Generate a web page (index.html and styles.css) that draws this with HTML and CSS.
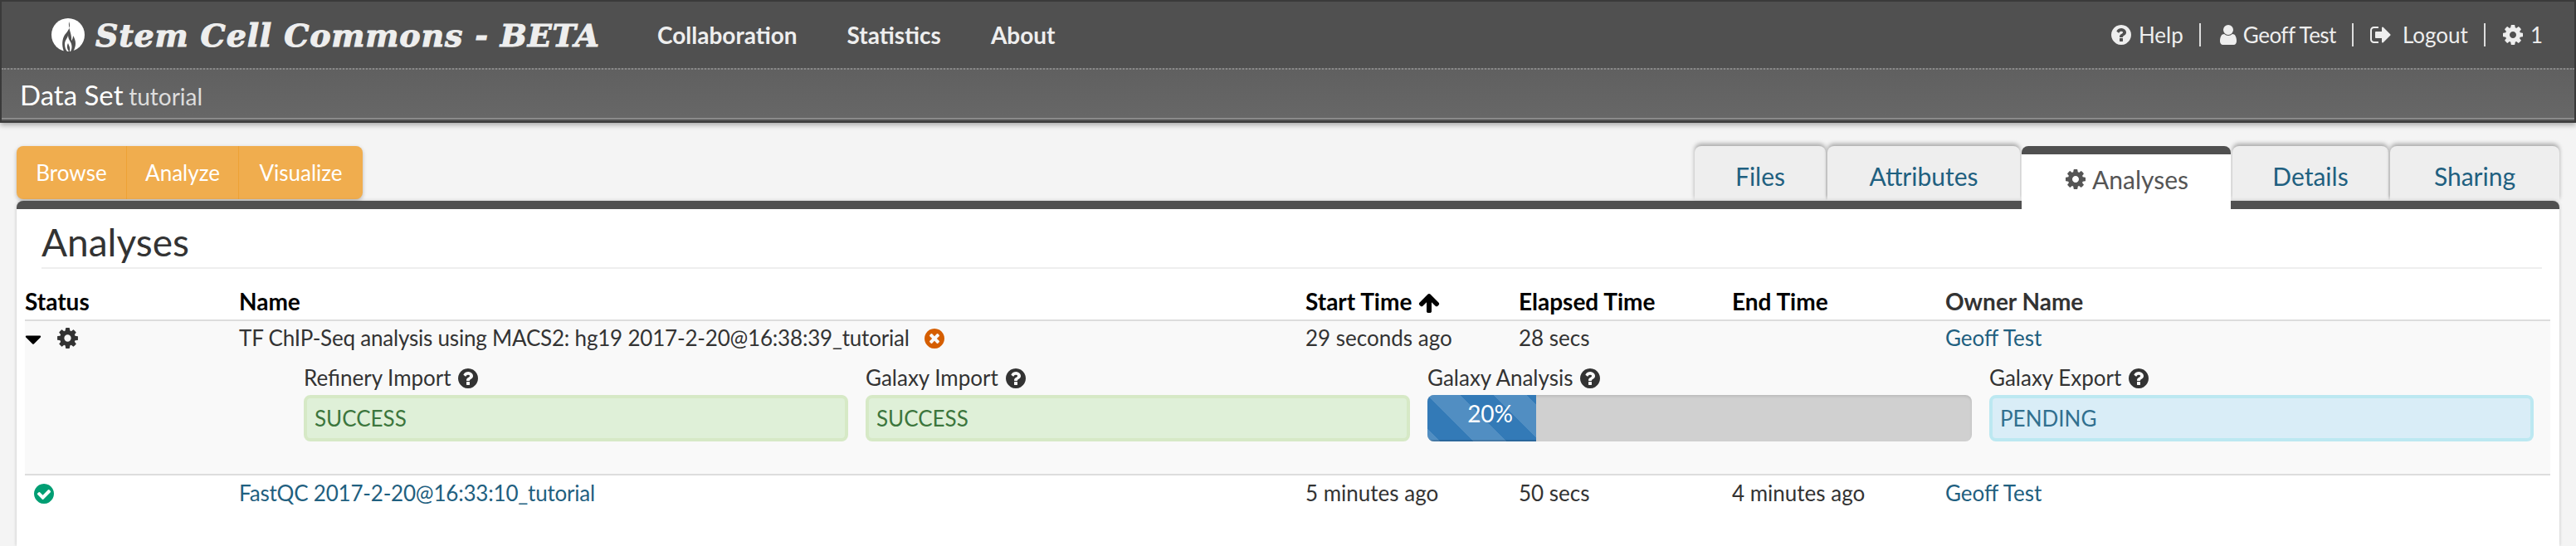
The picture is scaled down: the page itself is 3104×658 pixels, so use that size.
FILE: index.html
```html
<!DOCTYPE html>
<html lang="en">
<head>
    <meta charset="UTF-8">
    <title>Stem Cell Commons - Data Set tutorial</title>
    <link rel="stylesheet" href="styles.css">
</head>
<body>

    <svg class="sprite" xmlns="http://www.w3.org/2000/svg">
        <defs>
            <symbol id="i-cog" viewBox="0 0 1792 1792"><path d="M1152 896q0-106-75-181t-181-75-181 75-75 181 75 181 181 75 181-75 75-181zm512-109v222q0 12-8 23t-20 13l-185 28q-19 54-39 91 35 50 107 138 10 12 10 25t-9 23q-27 37-99 108t-94 71q-12 0-26-9l-138-108q-44 23-91 38-16 136-29 186-7 28-36 28h-222q-14 0-24.5-8.5t-11.5-21.5l-28-184q-49-16-90-37l-141 107q-10 9-25 9-14 0-25-11-126-114-165-168-7-10-7-23 0-12 8-23 15-21 51-66.5t54-70.5q-27-50-41-99l-183-27q-13-2-21-12.5t-8-23.5v-222q0-12 8-23t19-13l186-28q14-46 39-92-40-57-107-138-10-12-10-24 0-10 9-23 26-36 98.5-107.5t94.5-71.5q13 0 26 10l138 107q44-23 91-38 16-136 29-186 7-28 36-28h222q14 0 24.5 8.5t11.5 21.5l28 184q49 16 90 37l142-107q9-9 24-9 13 0 25 10 129 119 165 170 7 8 7 22 0 12-8 23-15 21-51 66.5t-54 70.5q26 50 41 98l183 28q13 2 21 12.5t8 23.5z"/></symbol>
            <symbol id="i-help" viewBox="0 0 1792 1792"><path d="M1024 1376v-192q0-14-9-23t-23-9h-192q-14 0-23 9t-9 23v192q0 14 9 23t23 9h192q14 0 23-9t9-23zm256-672q0-88-55.5-163t-138.5-116-170-41q-243 0-371 213-15 24 8 42l132 100q7 6 19 6 16 0 25-12 53-68 86-92 34-24 86-24 48 0 85.5 26t37.5 59q0 38-20 61t-68 45q-63 28-115.5 86.5t-52.5 125.5v36q0 14 9 23t23 9h192q14 0 23-9t9-23q0-19 21.5-49.5t54.5-49.5q32-18 49-28.5t46-35 44.5-48 28-60.5 12.5-81zm384 192q0 209-103 385.5t-279.5 279.5-385.5 103-385.5-103-279.5-279.5-103-385.5 103-385.5 279.5-279.5 385.5-103 385.5 103 279.5 279.5 103 385.5z"/></symbol>
            <symbol id="i-user" viewBox="0 0 1792 1792"><path d="M1536 1399q0 109-62.5 187t-150.5 78h-854q-88 0-150.5-78t-62.5-187q0-85 8.5-160.5t31.5-152 58.5-131 94-89 134.5-34.5q131 128 313 128t313-128q76 0 134.5 34.5t94 89 58.5 131 31.5 152 8.5 160.5zm-256-887q0 159-112.5 271.5t-271.5 112.5-271.5-112.5-112.5-271.5 112.5-271.5 271.5-112.5 271.5 112.5 112.5 271.5z"/></symbol>
            <symbol id="i-logout" viewBox="0 0 1792 1792"><path d="M704 1440q0 4 1 20t.5 26.5-3 23.5-10 19.5-20.5 6.5h-320q-119 0-203.5-84.5t-84.5-203.5v-704q0-119 84.5-203.5t203.5-84.5h320q13 0 22.5 9.5t9.5 22.5q0 4 1 20t.5 26.5-3 23.5-10 19.5-20.5 6.5h-320q-66 0-113 47t-47 113v704q0 66 47 113t113 47h312l11.5 1 11.5 3 8 5.5 7 9 2 13.5zm928-544q0 26-19 45l-544 544q-19 19-45 19t-45-19-19-45v-288h-448q-26 0-45-19t-19-45v-384q0-26 19-45t45-19h448v-288q0-26 19-45t45-19 45 19l544 544q19 19 19 45z"/></symbol>
            <symbol id="i-up" viewBox="0 0 1792 1792"><path d="M1675 971q0 51-37 90l-75 75q-38 38-91 38-54 0-90-38l-294-293v704q0 52-37.5 84.5t-90.5 32.5h-128q-53 0-90.5-32.5t-37.5-84.5v-704l-294 293q-36 38-90 38t-90-38l-75-75q-38-38-38-90 0-53 38-91l651-651q35-37 90-37 54 0 91 37l651 651q37 39 37 91z"/></symbol>
            <symbol id="i-caret" viewBox="0 0 1792 1792"><path d="M1408 704q0 26-19 45l-448 448q-19 19-45 19t-45-19l-448-448q-19-19-19-45t19-45 45-19h896q26 0 45 19t19 45z"/></symbol>
            <symbol id="i-times" viewBox="0 0 1792 1792"><path d="M1277 1122q0-26-19-45l-181-181 181-181q19-19 19-45 0-27-19-46l-90-90q-19-19-46-19-26 0-45 19l-181 181-181-181q-19-19-45-19-27 0-46 19l-90 90q-19 19-19 46 0 26 19 45l181 181-181 181q-19 19-19 45 0 27 19 46l90 90q19 19 46 19 26 0 45-19l181-181 181 181q19 19 45 19 27 0 46-19l90-90q19-19 19-46zm387-226q0 209-103 385.5t-279.5 279.5-385.5 103-385.5-103-279.5-279.5-103-385.5 103-385.5 279.5-279.5 385.5-103 385.5 103 279.5 279.5 103 385.5z"/></symbol>
            <symbol id="i-check" viewBox="0 0 1792 1792"><path d="M1412 734q0-28-18-46l-91-90q-19-19-45-19t-45 19l-408 407-226-226q-19-19-45-19t-45 19l-91 90q-18 18-18 46 0 27 18 45l362 362q19 19 45 19 27 0 46-19l543-543q18-18 18-45zm252 162q0 209-103 385.5t-279.5 279.5-385.5 103-385.5-103-279.5-279.5-103-385.5 103-385.5 279.5-279.5 385.5-103 385.5 103 279.5 279.5 103 385.5z"/></symbol>
        </defs>
    </svg>

    <header class="site-header">
        <nav class="navbar">
            <a class="brand">
                <svg class="brand-logo" viewBox="0 0 40 40">
                    <circle cx="20" cy="20" r="20" fill="#fff"/>
                    <path fill="#505050" d="M21 4c3 7-1 11-5 16-3 5-4 12-1 20h11c4-6 4-13 0-19 0 3-1 5-2 6 1-8-4-14-3-23z"/>
                    <path fill="#fff" d="M20 18c1 5-4 8-4 13 0 4 1 7 3 9h2c-2-3-3-6-1-10 1 3 3 5 2 10h1c3-5 1-10-1-13-2-3-2-6-2-9z"/>
                </svg>
                <span class="brand-name">Stem Cell Commons - BETA</span>
            </a>
            <ul class="nav-links">
                <li>Collaboration</li>
                <li>Statistics</li>
                <li>About</li>
            </ul>
            <ul class="nav-user">
                <li><svg class="icon"><use href="#i-help"/></svg><span class="nav-text">Help</span></li>
                <li><svg class="icon"><use href="#i-user"/></svg><span class="nav-text name">Geoff Test</span></li>
                <li><svg class="icon"><use href="#i-logout"/></svg><span class="nav-text wide">Logout</span></li>
                <li><svg class="icon"><use href="#i-cog"/></svg><span class="nav-text">1</span></li>
            </ul>
        </nav>
        <div class="subbar">
            <span class="subbar-title">Data Set</span>
            <span class="subbar-name">tutorial</span>
        </div>
    </header>

    <main class="page">
        <div class="toolbar">
            <div class="btn-group">
                <a class="btn">Browse</a>
                <a class="btn">Analyze</a>
                <a class="btn">Visualize</a>
            </div>
            <ul class="tabs">
                <li class="tab tab-files">Files</li>
                <li class="tab tab-attributes">Attributes</li>
                <li class="tab tab-analyses active"><svg class="icon"><use href="#i-cog"/></svg>Analyses</li>
                <li class="tab tab-details">Details</li>
                <li class="tab tab-sharing">Sharing</li>
            </ul>
        </div>

        <section class="panel">
            <h1 class="panel-title">Analyses</h1>
            <table class="analyses">
                <colgroup>
                    <col class="col-status">
                    <col class="col-name">
                    <col class="col-time">
                    <col class="col-time">
                    <col class="col-time">
                    <col>
                </colgroup>
                <thead>
                    <tr>
                        <th>Status</th>
                        <th>Name</th>
                        <th>Start Time <svg class="icon icon-up"><use href="#i-up"/></svg></th>
                        <th>Elapsed Time</th>
                        <th>End Time</th>
                        <th>Owner Name</th>
                    </tr>
                </thead>
                <tbody>
                    <tr class="running">
                        <td>
                            <svg class="icon icon-caret"><use href="#i-caret"/></svg>
                            <svg class="icon icon-gear"><use href="#i-cog"/></svg>
                        </td>
                        <td class="analysis-name">TF ChIP-Seq analysis using MACS2: hg19 2017-2-20@16:38:39_tutorial <svg class="icon icon-cancel"><use href="#i-times"/></svg></td>
                        <td>29 seconds ago</td>
                        <td>28 secs</td>
                        <td></td>
                        <td><a class="link">Geoff Test</a></td>
                    </tr>
                    <tr class="running stages-row">
                        <td colspan="6">
                            <div class="stages">
                                <div class="stage">
                                    <div class="stage-label">Refinery Import <svg class="icon"><use href="#i-help"/></svg></div>
                                    <div class="alert alert-success">SUCCESS</div>
                                </div>
                                <div class="stage">
                                    <div class="stage-label">Galaxy Import <svg class="icon"><use href="#i-help"/></svg></div>
                                    <div class="alert alert-success">SUCCESS</div>
                                </div>
                                <div class="stage">
                                    <div class="stage-label">Galaxy Analysis <svg class="icon"><use href="#i-help"/></svg></div>
                                    <div class="progress">
                                        <div class="progress-bar" style="width: 20%">20%</div>
                                    </div>
                                </div>
                                <div class="stage">
                                    <div class="stage-label">Galaxy Export <svg class="icon"><use href="#i-help"/></svg></div>
                                    <div class="alert alert-info">PENDING</div>
                                </div>
                            </div>
                        </td>
                    </tr>
                    <tr>
                        <td><svg class="icon icon-done"><use href="#i-check"/></svg></td>
                        <td class="analysis-name"><a class="link">FastQC 2017-2-20@16:33:10_tutorial</a></td>
                        <td>5 minutes ago</td>
                        <td>50 secs</td>
                        <td>4 minutes ago</td>
                        <td><a class="link">Geoff Test</a></td>
                    </tr>
                </tbody>
            </table>
        </section>
    </main>

</body>
</html>
```

FILE: styles.css
```css
* {
    box-sizing: border-box;
}

html, body {
    height: 100%;
}

body {
    margin: 0;
    display: flex;
    flex-direction: column;
    overflow: hidden;
    font-family: Lato, "Noto Sans", sans-serif;
    font-size: 26px;
    color: #333;
    background-color: #f4f4f4;
}

ul {
    list-style: none;
    margin: 0;
    padding: 0;
}

.sprite {
    display: none;
}

.icon {
    width: 28px;
    height: 28px;
    fill: currentColor;
    vertical-align: -5px;
}

/* header */
.site-header {
    height: 148px;
    border: 2px solid #3a3a3a;
    background-color: #505050;
    box-shadow: 0 3px 6px rgba(0, 0, 0, 0.3);
    color: #eee;
}

.navbar {
    display: flex;
    align-items: center;
    height: 80px;
    padding-left: 60px;
}

.brand {
    display: flex;
    align-items: center;
    gap: 13px;
    width: 730px;
}

.brand-logo {
    width: 40px;
    height: 40px;
}

.brand-name {
    font-family: "DejaVu Serif", serif;
    font-weight: bold;
    font-style: italic;
    font-size: 38px;
    letter-spacing: 0.8px;
    white-space: nowrap;
    -webkit-text-stroke: 1px #eee;
}

.nav-links {
    display: flex;
    gap: 60px;
    font-size: 28px;
    font-weight: bold;
}

.nav-user {
    display: flex;
    margin-left: auto;
    padding-right: 38px;
}

.nav-user li {
    display: flex;
    align-items: center;
    height: 28px;
    padding: 0 19px;
    border-left: 2px solid #ddd;
}

.nav-user li:first-child {
    border-left: 0;
}

.nav-user li:last-child {
    padding-right: 0;
}

.nav-text {
    margin-left: 7px;
}

.nav-text.name {
    margin-left: 4px;
    letter-spacing: -0.5px;
}

.nav-text.wide {
    margin-left: 12px;
}

.subbar {
    height: 62px;
    padding: 10px 22px 0;
    border-top: 2px dotted #888;
    border-bottom: 2px solid #8a8a8a;
    background: linear-gradient(#606060, #676767);
    line-height: 40px;
}

.subbar-title {
    font-size: 33px;
    color: #fff;
}

.subbar-name {
    font-size: 28px;
    color: #ddd;
}

/* tool buttons and tabs */
.page {
    flex: 1;
    display: flex;
    flex-direction: column;
    padding: 28px 20px 0;
    min-height: 0;
}

.toolbar {
    display: flex;
    justify-content: space-between;
    height: 66px;
}

.btn-group {
    display: flex;
    height: 64px;
    border-radius: 8px;
    background-color: #f0ad4e;
    box-shadow: 0 2px 5px rgba(0, 0, 0, 0.25);
}

.btn {
    display: flex;
    align-items: center;
    justify-content: center;
    width: 135px;
    color: #fff;
    border-left: 1px solid #eea236;
}

.btn:first-child {
    width: 132px;
    border-left: 0;
}

.btn:last-child {
    width: 150px;
}

.tabs {
    display: flex;
    align-items: flex-start;
    gap: 2px;
}

.tab {
    display: flex;
    align-items: center;
    justify-content: center;
    height: 66px;
    padding-top: 6px;
    border-radius: 8px 8px 0 0;
    background-color: #eee;
    box-shadow: 0 -3px 5px rgba(0, 0, 0, 0.3);
    color: #1f6080;
    font-size: 30px;
}

.tab-files { width: 158px; }
.tab-attributes { width: 232px; }
.tab-analyses { width: 252px; }
.tab-details { width: 188px; }
.tab-sharing { width: 204px; }

.tab.active {
    position: relative;
    height: 76px;
    padding: 0 0 6px;
    border-top: 10px solid #505050;
    background-color: #fff;
    box-shadow: none;
    color: #555;
    gap: 6px;
}

/* panel */
.panel {
    flex: 1;
    padding: 0 11px 0 10px;
    border-top: 10px solid #505050;
    border-radius: 8px 8px 0 0;
    background-color: #fff;
    box-shadow: 0 0 4px rgba(0, 0, 0, 0.2);
}

.panel-title {
    height: 72px;
    margin: 0 10px 0 20px;
    padding-top: 7px;
    border-bottom: 2px solid #eee;
    font-size: 46px;
    font-weight: normal;
    line-height: 66px;
}

.analyses {
    width: 100%;
    border-collapse: collapse;
    table-layout: fixed;
}

.col-status { width: 258px; }
.col-name { width: 1285px; }
.col-time { width: 257px; }

.analyses th {
    height: 62px;
    padding: 0 0 6px;
    border-bottom: 2px solid #ddd;
    color: #000;
    font-size: 28px;
    text-align: left;
    vertical-align: bottom;
    line-height: 32px;
}

.analyses th:last-child {
    color: #333;
}

.analyses td {
    height: 40px;
    padding: 4px 0 0;
    line-height: 34px;
    vertical-align: top;
    white-space: nowrap;
}

.analyses .running td {
    padding-top: 3px;
}

.analyses .analysis-name {
    letter-spacing: -0.2px;
}

.running {
    background-color: #f9f9f9;
}

.analyses .stages-row td {
    height: 146px;
    padding: 0 20px 0 336px;
    border-bottom: 2px solid #ddd;
}

.stages {
    display: grid;
    grid-template-columns: repeat(4, 1fr);
    column-gap: 21px;
}

.stage-label {
    height: 50px;
    padding-top: 13px;
    line-height: 32px;
}

.link {
    color: #1f6080;
}

.icon-up {
    color: #000;
}

.icon-caret {
    width: 32px;
    height: 32px;
    margin-left: -6px;
    color: #000;
    vertical-align: -8px;
}

.icon-gear {
    width: 29px;
    height: 29px;
    margin-left: 4px;
    color: #333;
}

.icon-cancel {
    margin-left: 10px;
    color: #d55e00;
}

.icon-done {
    margin-left: 9px;
    color: #009e73;
}

.alert {
    display: flex;
    align-items: center;
    height: 56px;
    padding-left: 9px;
    border: 4px solid;
    border-radius: 8px;
}

.alert-success {
    background-color: #dff0d8;
    border-color: #d6e9c6;
    color: #3c763d;
}

.alert-info {
    background-color: #d9edf7;
    border-color: #bce8f1;
    color: #31708f;
}

.progress {
    height: 56px;
    overflow: hidden;
    border-radius: 8px;
    background-color: #d0d0d0;
    box-shadow: inset 0 2px 3px rgba(0, 0, 0, 0.1);
}

.progress-bar {
    height: 100%;
    padding-left: 20px;
    background-color: #337ab7;
    background-image: linear-gradient(45deg, rgba(255, 255, 255, 0.15) 25%, transparent 25%, transparent 50%, rgba(255, 255, 255, 0.15) 50%, rgba(255, 255, 255, 0.15) 75%, transparent 75%, transparent);
    background-size: 80px 80px;
    box-shadow: inset 0 -2px 0 rgba(0, 0, 0, 0.15);
    color: #fff;
    font-size: 28px;
    text-align: center;
    line-height: 44px;
}
```
